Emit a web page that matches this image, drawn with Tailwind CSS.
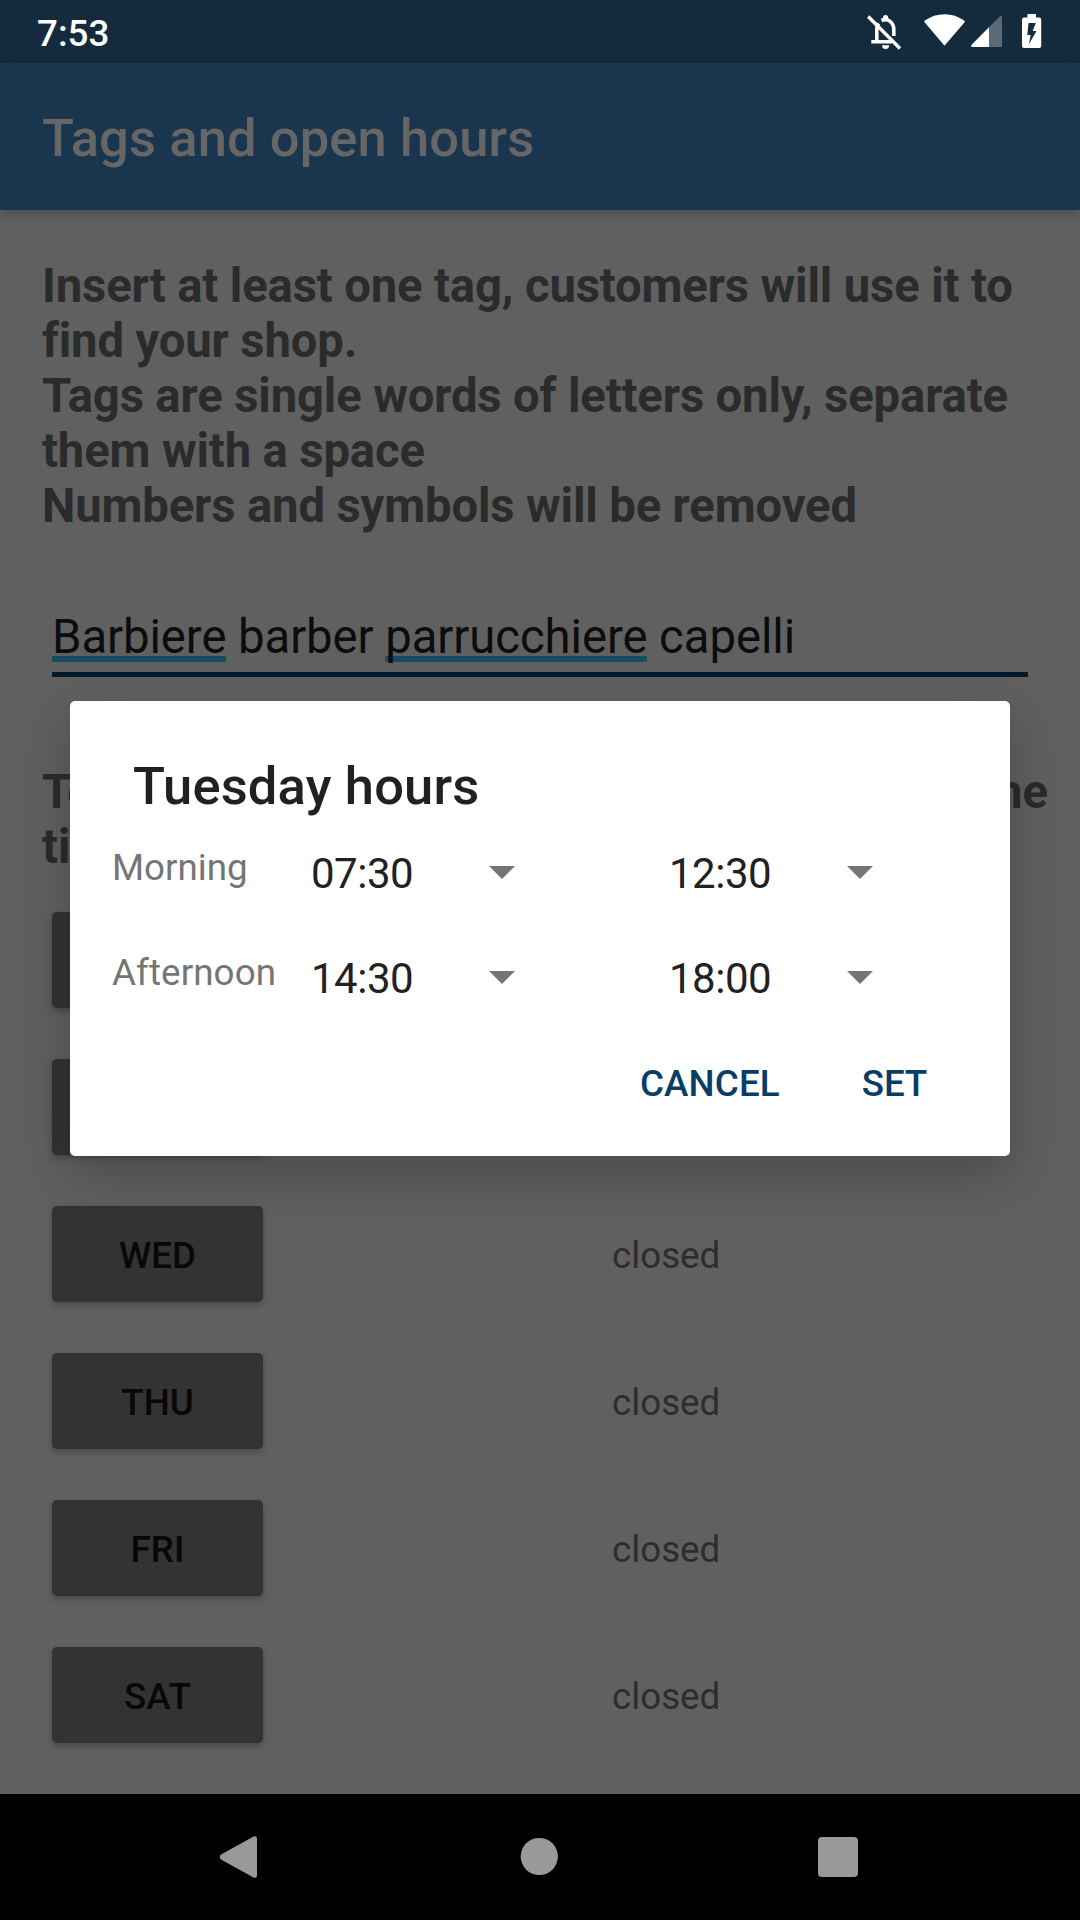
<!DOCTYPE html>
<html lang="en">
<head>
<meta charset="utf-8">
<title>Tags and open hours</title>
<script src="https://cdn.jsdelivr.net/npm/@tailwindcss/browser@4"></script>
</head>
<body class="bg-[#606060] font-['Roboto',sans-serif]">
<div class="relative w-[1080px] h-[1920px] overflow-hidden flex flex-col">
  <header class="h-[63px] shrink-0 bg-[#142a3d] flex items-start justify-between pl-[37px]">
    <span class="text-[36.75px] leading-[43px] pt-[12px] font-medium text-white">7:53</span>
    <svg class="w-[240px] h-[63px]" viewBox="0 0 240 63" fill="#fff">
      <!-- muted bell -->
      <path fill="none" stroke="#fff" stroke-width="3.6" d="M36.8 41V29.5C36.8 27 37.400 25 38.500 23.300M41.500 20.500C48 17.500 53.800 23 53.800 29.500V36M31.300 41.800H52"/>
      <path d="M43 19v-1.500a2.600 2.600 0 0 1 5.200 0V19zM42 45.300h7.200a3.600 3.600 0 0 1-7.200 0z"/>
      <path fill="none" stroke="#fff" stroke-width="3.400" d="M28.200 16.500L60 48.500"/>
      <!-- wifi -->
      <path d="M104.500 45.800L84.400 22Q84 21.300 84.800 20.600C96 12 113 12 124.200 20.600Q125.200 21.300 124.600 22.200Z"/>
      <!-- signal -->
      <path d="M149 27.300V47H132Q130.400 46.300 131.300 45Z"/>
      <path fill="#5b6a77" d="M149 27.300L159.800 16.400Q161.800 15.300 162 17V45.500Q162 47 160.500 47H149Z"/>
      <!-- charging battery -->
      <path fill-rule="evenodd" d="M187.500 14h8.500v3.500h3.200q2 0 2 2V46q0 2-2 2h-15.200q-2 0-2-2V19.500q0-2 2-2h3.500zM188.500 23L187.300 35h3.400L188.700 44.500 196.500 31h-3.800L195.800 23z"/>
    </svg>
  </header>
  <div class="relative h-[147px] shrink-0 bg-[#19364e] flex items-center pl-[42px] pt-[3px] shadow-[0_3px_10px_rgba(0,0,0,0.2)]">
    <h1 class="text-[52.5px] leading-[62px] tracking-[0.11px] font-medium text-[#666]">Tags and open hours</h1>
  </div>
  <main class="flex-1 px-[42px] pt-[49px] flex flex-col">
    <p class="text-[47.25px] leading-[55px] tracking-[-0.15px] font-bold text-[#2b2b2b] whitespace-nowrap">Insert at least one tag, customers will use it to<br>find your shop.<br>Tags are single words of letters only, separate<br>them with a space<br>Numbers and symbols will be removed</p>
    <div class="mx-[10px] mt-[76px] h-[67px] border-b-[5px] border-[#04192a] text-[47.25px] leading-[55px] tracking-[-0.06px] text-[#0c0c0c] whitespace-pre"><span class="inline-block h-[52px] border-b-[6px] border-[#174c61]">Barbiere</span> barber <span class="inline-block h-[52px] border-b-[6px] border-[#174c61]">parrucchiere</span> capelli</div>
    <div class="mt-[88px] -mr-[10px] text-[47.25px] leading-[55px] font-bold text-[#2b2b2b]">
      <p class="flex justify-between"><span>To</span><span>the</span></p>
      <p>time</p>
    </div>
    <div class="mt-[37px] ml-[10px] flex flex-col gap-[51px] text-[36.75px] leading-[43px]">
      <div class="flex items-center"><div class="w-[211px] h-[96px] pt-[2px] rounded-[5px] bg-[#333] text-[#080808] font-medium flex items-center justify-center shadow-[0_3px_6px_rgba(0,0,0,0.25)]">MON</div></div>
      <div class="flex items-center"><div class="w-[211px] h-[96px] pt-[2px] rounded-[5px] bg-[#333] text-[#080808] font-medium flex items-center justify-center shadow-[0_3px_6px_rgba(0,0,0,0.25)]">TUE</div></div>
      <div class="flex items-center"><div class="w-[211px] h-[96px] pt-[2px] rounded-[5px] bg-[#333] text-[#080808] font-medium flex items-center justify-center shadow-[0_3px_6px_rgba(0,0,0,0.25)]">WED</div><span class="ml-[349px] pt-[2px] text-[#2d2d2d]">closed</span></div>
      <div class="flex items-center"><div class="w-[211px] h-[96px] pt-[2px] rounded-[5px] bg-[#333] text-[#080808] font-medium flex items-center justify-center shadow-[0_3px_6px_rgba(0,0,0,0.25)]">THU</div><span class="ml-[349px] pt-[2px] text-[#2d2d2d]">closed</span></div>
      <div class="flex items-center"><div class="w-[211px] h-[96px] pt-[2px] rounded-[5px] bg-[#333] text-[#080808] font-medium flex items-center justify-center shadow-[0_3px_6px_rgba(0,0,0,0.25)]">FRI</div><span class="ml-[349px] pt-[2px] text-[#2d2d2d]">closed</span></div>
      <div class="flex items-center"><div class="w-[211px] h-[96px] pt-[2px] rounded-[5px] bg-[#333] text-[#080808] font-medium flex items-center justify-center shadow-[0_3px_6px_rgba(0,0,0,0.25)]">SAT</div><span class="ml-[349px] pt-[2px] text-[#2d2d2d]">closed</span></div>
    </div>
  </main>
  <nav class="h-[126px] shrink-0 bg-black">
    <svg class="w-full h-full" viewBox="0 0 1080 126" fill="#999">
      <path d="M221 60.500L254 42.300Q257 41.500 257 44.500V81.500Q257 84.500 254 83.700L221 65.500Q218.500 63 221 60.500Z"/>
      <circle cx="539.300" cy="62.500" r="18.600"/>
      <rect x="818" y="43" width="40" height="40" rx="4"/>
    </svg>
  </nav>
  <section class="absolute left-[70px] top-[701px] w-[940px] h-[455px] rounded-[5px] bg-white flex flex-col shadow-[0_18px_56px_rgba(0,0,0,0.24)]">
    <h2 class="pl-[63px] pt-[54px] text-[52.5px] leading-[62px] tracking-[0.17px] font-medium text-[#212121]">Tuesday hours</h2>
    <div class="pl-[42px] pt-[20px] grid grid-cols-[199px_358px_1fr] auto-rows-[105px]">
      <span class="pt-[9px] text-[36.75px] leading-[43px] text-[#757575]">Morning</span>
      <div class="flex items-start text-[42px] leading-[49px] tracking-[-0.5px] text-[#212121]"><span class="w-[178px] pt-[12px]">07:30</span><svg class="mt-[29px] w-[26px] h-[13px]" viewBox="0 0 26 13" fill="#757575"><path d="M0 0H26L13 13Z"/></svg></div>
      <div class="flex items-start text-[42px] leading-[49px] tracking-[-0.5px] text-[#212121]"><span class="w-[178px] pt-[12px]">12:30</span><svg class="mt-[29px] w-[26px] h-[13px]" viewBox="0 0 26 13" fill="#757575"><path d="M0 0H26L13 13Z"/></svg></div>
      <span class="pt-[9px] text-[36.75px] leading-[43px] tracking-[0.1px] text-[#757575]">Afternoon</span>
      <div class="flex items-start text-[42px] leading-[49px] tracking-[-0.5px] text-[#212121]"><span class="w-[178px] pt-[12px]">14:30</span><svg class="mt-[29px] w-[26px] h-[13px]" viewBox="0 0 26 13" fill="#757575"><path d="M0 0H26L13 13Z"/></svg></div>
      <div class="flex items-start text-[42px] leading-[49px] tracking-[-0.5px] text-[#212121]"><span class="w-[178px] pt-[12px]">18:00</span><svg class="mt-[29px] w-[26px] h-[13px]" viewBox="0 0 26 13" fill="#757575"><path d="M0 0H26L13 13Z"/></svg></div>
    </div>
    <div class="pt-[15px] pr-[83px] flex justify-end gap-[82px] text-[36.75px] leading-[43px] font-medium text-[#0a3d66]"><span class="tracking-[0.15px]">CANCEL</span><span class="tracking-[-0.2px]">SET</span></div>
  </section>
</div>
</body>
</html>
